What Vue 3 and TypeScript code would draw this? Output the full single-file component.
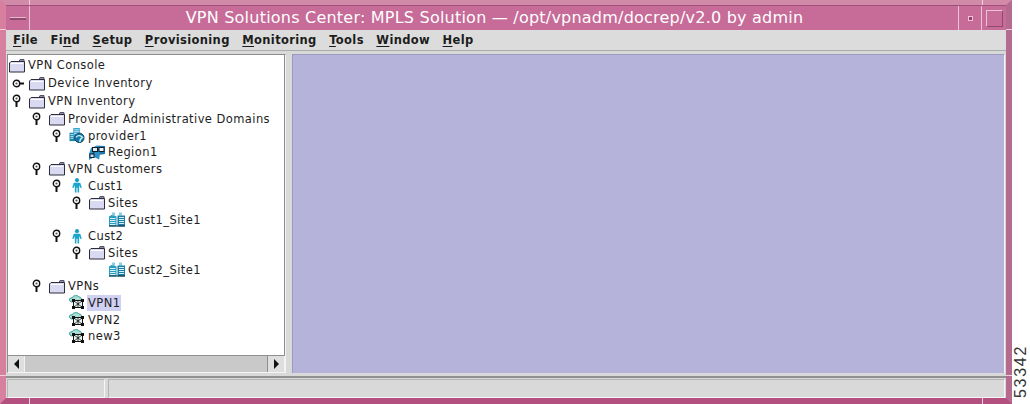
<template>
  <div class="page">
    <svg class="defs" width="0" height="0">
      <defs>
        <symbol id="folder" viewBox="0 0 16 14">
          <path d="M10 3 L11 1 H15 V3" fill="#8c8c9c" stroke="#55556a" />
          <path d="M.5 4.5 L2 3 H15.5 V13.5 H.5 Z" fill="#d9d9f2" stroke="#2c2c3c" />
          <path d="M2 5 H14" stroke="#fff" />
        </symbol>
        <symbol id="provider" viewBox="0 0 16 16">
          <path d="M0 5 H6 V14 H0 Z" fill="#1f86ad" />
          <path d="M4 0 H11 V11 H4 Z" fill="#3aa5d0" />
          <path d="M5 2 H10 M5 4 H10 M5 6 H10 M1 7 H4 M1 9 H4 M1 11 H4" stroke="#c4e8f6" />
          <circle cx="10.5" cy="10.5" r="5" fill="#127aa8" stroke="#0c3f5c" />
          <path d="M7 10 C9 7 12 8 14 10 C12 11 11 12 11 15" fill="none" stroke="#c8f0f8" stroke-width="1.4" />
        </symbol>
        <symbol id="region" viewBox="0 0 16 15">
          <path d="M2 3 L8 0.5 L16 1 L16 9 L11 9.5 L10 14.5 L5 12 L0 15 L0 9 Z" fill="#2f92c6" />
          <path d="M9 1 L16 1 L16 9 L11 9.5 Z" fill="#2277ac" />
          <rect x="3.5" y="2.5" width="5" height="4" fill="#e3eef8" stroke="#0e1e2c" />
          <rect x="10" y="2.5" width="5" height="4" fill="#eef3f8" stroke="#0e1e2c" />
          <rect x="1" y="9" width="4" height="3.5" fill="#cde4f3" stroke="#0e1e2c" />
          <path d="M6 6.5 L3.5 9 M8.5 4.5 H10" stroke="#0e1e2c" />
        </symbol>
        <symbol id="person" viewBox="0 0 10 14">
          <circle cx="5" cy="2" r="1.9" fill="#1b9fc6" />
          <path d="M2 4.5 H8 L9.5 9 H8 L7 6.5 V13.5 H5.5 V9 H4.5 V13.5 H3 V6.5 L2 9 H.5 Z" fill="#18a6cc" />
        </symbol>
        <symbol id="site" viewBox="0 0 16 14">
          <path d="M0 4 L3.5 2 L7.5 4 V14 H0 Z" fill="#2a9cbf" />
          <path d="M3 0 H6 V3 H3 Z M10 0 H13 V3 H10 Z" fill="#8ccde2" />
          <path d="M8.5 3 H16 V14 H8.5 Z" fill="#1b7fa8" />
          <path d="M1 6 H6.5 M1 8 H6.5 M1 10 H6.5 M1 12 H6.5 M10 5 H15 M10 7 H15 M10 9 H15 M10 11 H15" stroke="#d7f1f8" />
          <path d="M0 13.5 H16" stroke="#10323f" />
        </symbol>
        <symbol id="vpn" viewBox="0 0 16 15">
          <path d="M2 7 C-1 5 1 2 3 3 C4 0 9 0 10 2 C13 2 13 5 11 6 Z" fill="#a9dcd3" stroke="#2f9c95" />
          <rect x="4.5" y="5.5" width="9" height="7" fill="#e8f4f2" stroke="#111" />
          <path d="M5 6 L13 12 M13 6 L5 12 M9 6 V12" stroke="#111" stroke-width=".8" />
          <path d="M3 4 H6 V7 H3 Z M12 4 H15 V7 H12 Z M3 11 H6 V14 H3 Z M12 11 H15 V14 H12 Z" fill="#111" />
        </symbol>
      </defs>
    </svg>

    <div class="frame">
      <div class="titlebar">
        <div class="window-btn"><span class="menu-dash"></span></div>
        <div class="title">VPN Solutions Center: MPLS Solution — /opt/vpnadm/docrep/v2.0 by admin</div>
        <div class="min-btn"><span class="min-dot"></span></div>
        <div class="max-btn"><span class="max-box"></span></div>
      </div>

      <div class="menubar">
        <span v-for="m in menus" :key="m.label" class="menu-item">{{ m.label.slice(0, m.at) }}<u>{{ m.label[m.at] }}</u>{{ m.label.slice(m.at + 1) }}</span>
      </div>

      <div class="split">
        <div class="tree-pane">
          <div class="tree">
            <div
              v-for="n in nodes"
              :key="n.label + n.top"
              class="row"
              :style="{ height: n.h + 'px', paddingLeft: Math.max(0, n.depth - 1) * 20 + 1 + 'px' }"
            >
              <span v-if="n.depth > 0" class="toggle">
                <svg v-if="n.exp === 'open'" width="9" height="14" viewBox="0 0 9 14">
                  <circle cx="4.5" cy="4.5" r="3.2" fill="#fff" stroke="#111" stroke-width="1.4" />
                  <circle cx="4.5" cy="4.5" r="1.1" fill="#555" />
                  <path d="M4.5 8 V13" stroke="#111" stroke-width="2" />
                </svg>
                <svg v-else-if="n.exp === 'closed'" width="14" height="9" viewBox="0 0 14 9">
                  <circle cx="4.5" cy="4.5" r="3.2" fill="#fff" stroke="#111" stroke-width="1.4" />
                  <circle cx="4.5" cy="4.5" r="1.1" fill="#555" />
                  <path d="M8 4.5 H12" stroke="#111" stroke-width="2" />
                </svg>
              </span>
              <svg class="node-icon" width="16" height="15"><use :href="'#' + n.icon" /></svg>
              <span class="label" :class="{ selected: n.selected }">{{ n.label }}</span>
            </div>
          </div>
          <div class="hscroll">
            <div class="arrow"><span class="tri-left"></span></div>
            <div class="trough"></div>
            <div class="arrow"><span class="tri-right"></span></div>
          </div>
        </div>
        <div class="canvas"></div>
      </div>

      <div class="statusbar">
        <div class="cell first"></div>
        <div class="cell rest"></div>
      </div>
    </div>

    <div class="margin"><span class="fig-no">53342</span></div>

    <i v-for="(c, i) in notches" :key="i" class="notch" :style="{ left: c[0] + 'px', top: c[1] + 'px', width: c[2] + 'px', height: c[3] + 'px' }"></i>
  </div>
</template>

<script setup lang="ts">
interface MenuEntry {
  label: string
  at: number
}

interface TreeNode {
  label: string
  depth: number
  icon: string
  h: number
  top: number
  exp?: 'open' | 'closed'
  selected?: boolean
}

const menus: MenuEntry[] = [
  { label: 'File', at: 0 },
  { label: 'Find', at: 2 },
  { label: 'Setup', at: 0 },
  { label: 'Provisioning', at: 0 },
  { label: 'Monitoring', at: 0 },
  { label: 'Tools', at: 0 },
  { label: 'Window', at: 0 },
  { label: 'Help', at: 0 },
]

const nodes: TreeNode[] = [
  { label: 'VPN Console', depth: 0, icon: 'folder', h: 18, top: 0 },
  { label: 'Device Inventory', depth: 1, icon: 'folder', h: 18, top: 1, exp: 'closed' },
  { label: 'VPN Inventory', depth: 1, icon: 'folder', h: 18, top: 2, exp: 'open' },
  { label: 'Provider Administrative Domains', depth: 2, icon: 'folder', h: 17, top: 3, exp: 'open' },
  { label: 'provider1', depth: 3, icon: 'provider', h: 17, top: 4, exp: 'open' },
  { label: 'Region1', depth: 4, icon: 'region', h: 16, top: 5 },
  { label: 'VPN Customers', depth: 2, icon: 'folder', h: 17, top: 6, exp: 'open' },
  { label: 'Cust1', depth: 3, icon: 'person', h: 17, top: 7, exp: 'open' },
  { label: 'Sites', depth: 4, icon: 'folder', h: 17, top: 8, exp: 'open' },
  { label: 'Cust1_Site1', depth: 5, icon: 'site', h: 17, top: 9 },
  { label: 'Cust2', depth: 3, icon: 'person', h: 16, top: 10, exp: 'open' },
  { label: 'Sites', depth: 4, icon: 'folder', h: 17, top: 11, exp: 'open' },
  { label: 'Cust2_Site1', depth: 5, icon: 'site', h: 17, top: 12 },
  { label: 'VPNs', depth: 2, icon: 'folder', h: 16, top: 13, exp: 'open' },
  { label: 'VPN1', depth: 3, icon: 'vpn', h: 17, top: 14, selected: true },
  { label: 'VPN2', depth: 3, icon: 'vpn', h: 17, top: 15 },
  { label: 'new3', depth: 3, icon: 'vpn', h: 16, top: 16 },
]

// little corner cuts in the window manager's border: left, top, width, height
const notches: number[][] = [
  [29, 0, 1, 5],
  [982, 0, 1, 5],
  [29, 398, 1, 6],
  [982, 398, 1, 6],
  [0, 29, 6, 1],
  [1006, 29, 6, 1],
  [0, 375, 6, 1],
  [1006, 375, 6, 1],
]
</script>

<style>
html, body {
  margin: 0;
  background: #fff;
  overflow: hidden;
}
</style>

<style scoped>
.page {
  position: relative;
  display: flex;
  width: 1030px;
  height: 404px;
  background: #fff;
  overflow: hidden;
}

.defs {
  position: absolute;
}

.notch {
  position: absolute;
  background: #f0cfdc;
}

.frame {
  box-sizing: border-box;
  width: 1012px;
  height: 404px;
  display: flex;
  flex-direction: column;
  background: #d9d9d9;
  border-style: solid;
  border-width: 5px 6px 6px 6px;
  border-color: #d28aa9 #b56a8f #b4507f #d77f9f;
}

.titlebar {
  display: flex;
  height: 25px;
  flex: none;
  background: #c76b98;
  border-top: 1px solid #a04f7a;
  box-sizing: border-box;
}

.window-btn,
.min-btn,
.max-btn {
  flex: none;
  display: flex;
  align-items: center;
  justify-content: center;
  box-sizing: border-box;
}

.window-btn {
  width: 24px;
  border-right: 1px solid #eec5d6;
}

.menu-dash {
  width: 16px;
  height: 2px;
  background: #8f4a70;
  border-top: 1px solid #eab8cd;
}

.title {
  flex: 1;
  text-align: center;
  color: #fff;
  font: 16px/23px "DejaVu Sans", sans-serif;
  letter-spacing: 0.22px;
  white-space: nowrap;
  padding-left: 1px;
}

.min-btn {
  width: 24px;
  border-left: 1px solid #eec5d6;
  border-right: 1px solid #eec5d6;
}

.min-dot {
  width: 3px;
  height: 3px;
  background: #9a3f70;
  border: 1px solid #eec5d6;
}

.max-btn {
  width: 24px;
}

.max-box {
  box-sizing: border-box;
  width: 17px;
  height: 17px;
  border: 1px solid #eec5d6;
  border-right-color: #8f4a70;
  border-bottom-color: #8f4a70;
}

.menubar {
  display: flex;
  flex: none;
  gap: 12.5px;
  height: 20px;
  padding-left: 7px;
  align-items: center;
  font: bold 11.5px "DejaVu Sans", sans-serif;
  letter-spacing: 0.35px;
  color: #1c1c1c;
  border-bottom: 1px solid #a9aca9;
  background: #dcdcdc;
}

.menu-item u {
  text-underline-offset: 1.5px;
}

.split {
  flex: 1;
  min-height: 0;
  display: flex;
  gap: 6px;
  padding: 3px 1px 3px 1px;
  border-bottom: 2px solid #8f918f;
}

.tree-pane {
  box-sizing: border-box;
  width: 279px;
  display: flex;
  flex-direction: column;
  border: 1px solid #8c8c8c;
  border-right-color: #f4f4f4;
  border-bottom-color: #f4f4f4;
}

.tree {
  flex: 1;
  min-height: 0;
  padding-top: 1px;
  background: #fff;
  overflow: hidden;
  border-right: 1px solid #8c8c8c;
}

.row {
  display: flex;
  align-items: center;
  box-sizing: border-box;
  font: 11.5px "DejaVu Sans", sans-serif;
  letter-spacing: 0.42px;
  color: #1e1e1e;
  white-space: nowrap;
}

.toggle {
  flex: none;
  width: 20px;
  display: flex;
  justify-content: flex-start;
  padding-left: 3px;
  box-sizing: border-box;
}

.node-icon {
  flex: none;
  margin-right: 2px;
}

.label {
  padding: 1px 1px;
  line-height: 14px;
}

.label.selected {
  background: #d0d0f2;
}

.hscroll {
  flex: none;
  display: flex;
  height: 16px;
  background: #d9d9d9;
  border-top: 1px solid #8f8f8f;
}

.arrow {
  flex: none;
  width: 16px;
  display: flex;
  align-items: center;
  justify-content: center;
  background: #dedede;
  border-right: 1px solid #f2f2f2;
}

.trough {
  flex: 1;
  background: #c9c9c9;
  border-right: 1px solid #8f8f8f;
}

.tri-left {
  border: 5px solid transparent;
  border-left-width: 0;
  border-right: 5px solid #111;
}

.tri-right {
  border: 5px solid transparent;
  border-right-width: 0;
  border-left: 5px solid #111;
}

.canvas {
  flex: 1;
  background: #b5b3da;
  border-left: 1px solid #9c9ac0;
  border-top: 1px solid #9c9ac0;
  border-right: 1px solid #f4f4f4;
}

.statusbar {
  flex: none;
  display: flex;
  gap: 3px;
  height: 20px;
  padding: 1px 1px 0 1px;
  box-sizing: border-box;
}

.cell {
  box-sizing: border-box;
  border: 1px solid #b4b4b4;
  border-right-color: #f6f6f6;
  border-bottom-color: #f6f6f6;
}

.cell.first {
  width: 98px;
}

.cell.rest {
  flex: 1;
}

.margin {
  flex: 1;
  display: flex;
  align-items: flex-end;
  justify-content: center;
  padding-bottom: 6px;
}

.fig-no {
  writing-mode: vertical-rl;
  transform: rotate(180deg);
  font: 16px "Liberation Sans", sans-serif;
  letter-spacing: 1.7px;
  color: #333;
}
</style>
